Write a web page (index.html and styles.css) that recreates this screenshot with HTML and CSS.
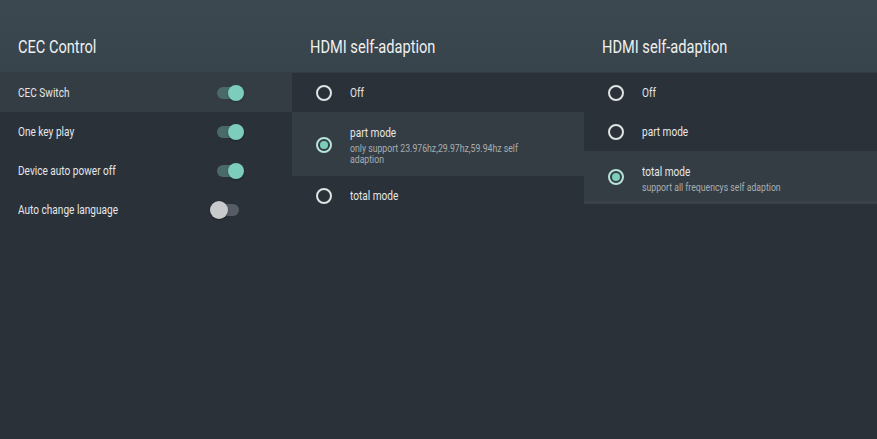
FILE: index.html
```html
<!DOCTYPE html>
<html>
<head>
<meta charset="utf-8">
<link rel="stylesheet" href="styles.css">
</head>
<body>
<div class="screen">
  <section class="panel">
    <header class="head"><h1>CEC Control</h1></header>
    <div class="list">
      <div class="row sw-row sel"><span class="label">CEC Switch</span><span class="switch on"><i class="track"></i><i class="thumb"></i></span></div>
      <div class="row sw-row"><span class="label">One key play</span><span class="switch on"><i class="track"></i><i class="thumb"></i></span></div>
      <div class="row sw-row"><span class="label">Device auto power off</span><span class="switch on"><i class="track"></i><i class="thumb"></i></span></div>
      <div class="row sw-row"><span class="label">Auto change language</span><span class="switch off"><i class="track"></i><i class="thumb"></i></span></div>
    </div>
  </section>
  <section class="panel">
    <header class="head"><h1>HDMI self-adaption</h1></header>
    <div class="list">
      <div class="row radio-row"><span class="radio"></span><div class="txt"><div class="label">Off</div></div></div>
      <div class="row radio-row sel tall"><span class="radio checked"></span><div class="txt"><div class="label">part mode</div><div class="sub">only support 23.976hz,29.97hz,59.94hz self<br>adaption</div></div></div>
      <div class="row radio-row"><span class="radio"></span><div class="txt"><div class="label">total mode</div></div></div>
    </div>
  </section>
  <section class="panel">
    <header class="head"><h1>HDMI self-adaption</h1></header>
    <div class="list">
      <div class="row radio-row"><span class="radio"></span><div class="txt"><div class="label">Off</div></div></div>
      <div class="row radio-row"><span class="radio"></span><div class="txt"><div class="label">part mode</div></div></div>
      <div class="row radio-row sel mid"><span class="radio checked"></span><div class="txt"><div class="label">total mode</div><div class="sub">support all frequencys self adaption</div></div></div>
    </div>
  </section>
</div>
</body>
</html>
```
FILE: styles.css
```css
* { box-sizing: border-box; margin: 0; padding: 0; }
html, body { width: 877px; height: 439px; overflow: hidden; }
body { background: #2a3139; font-family: Roboto, "Noto Sans", sans-serif; color: #e6e8e9; }
.screen { display: grid; grid-template-columns: 292px 292px 293px; height: 439px; }
.panel { display: flex; flex-direction: column; background: #2a3139; }
.head { height: 73px; background: linear-gradient(#3b484f, #37444b); border-bottom: 1px solid #323d43; display: flex; align-items: flex-end; padding: 0 0 15px 18px; }
.head h1 { font-weight: 400; font-size: 17.5px; color: #eef0f1; line-height: 20px; display: inline-block; transform: scaleX(0.835); transform-origin: left center; white-space: nowrap; }
.list { display: flex; flex-direction: column; }
.row { display: flex; align-items: center; height: 39px; }
.row.sel { background: #353d44; }
.sw-row { padding: 0 48px 0 18px; justify-content: space-between; }
.label { font-size: 12.6px; line-height: 15px; color: #e4e6e8; display: inline-block; transform: scaleX(0.8); transform-origin: left center; white-space: nowrap; }
.switch { position: relative; width: 34px; height: 18px; display: block; }
.switch .track { position: absolute; left: 7px; top: 3px; width: 24px; height: 12px; border-radius: 6px; background: #4a6a67; }
.switch .thumb { position: absolute; top: 1px; width: 16px; height: 16px; border-radius: 50%; background: #7dcdbd; box-shadow: 0 1px 2px rgba(0,0,0,0.3); }
.switch.on .thumb { left: 18px; }
.switch.off .track { left: 5px; background: #565c63; }
.switch.off .thumb { left: 0; top: 0; width: 18px; height: 18px; background: #c9cacc; }
.radio-row { padding-left: 24px; }
.radio { width: 16px; height: 16px; border-radius: 50%; border: 2px solid #dfe3e4; flex: none; margin-right: 18px; position: relative; }
.radio.checked { border-color: #b7e3d9; }
.radio.checked::after { content: ""; position: absolute; left: 2px; top: 2px; width: 8px; height: 8px; border-radius: 50%; background: #7dcdbd; }
.txt { display: flex; flex-direction: column; align-items: flex-start; }
.sub { font-size: 10px; line-height: 11.5px; color: #a7aeb2; margin-top: 3px; transform: scaleX(0.87); transform-origin: left center; white-space: nowrap; }
.row.tall { height: 64px; padding-top: 2px; }
.row.mid { height: 53px; padding-top: 5px; border-bottom: 3px solid #3a4248; }
.row.mid .radio { margin-top: -4px; }
```
